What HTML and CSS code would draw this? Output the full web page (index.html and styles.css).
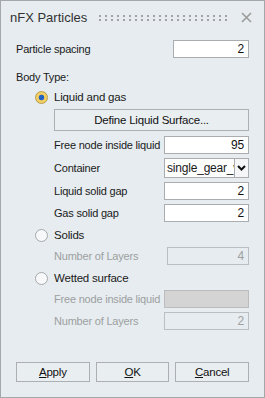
FILE: index.html
```html
<!DOCTYPE html>
<html lang="en">
<head>
  <meta charset="UTF-8">
  <title>nFX Particles</title>
  <link rel="stylesheet" href="styles.css">
</head>
<body>
<div class="dialog">
  <div class="titlebar">
    <span class="title">nFX Particles</span>
    <span class="grip"></span>
    <svg class="close" width="11" height="11" viewBox="0 0 11 11">
      <path d="M1 1L10 10M10 1L1 10" stroke="#9c9c9c" stroke-width="1.6" fill="none"/>
    </svg>
  </div>

  <div class="row spacing-row">
    <span>Particle spacing</span>
    <span class="input">2</span>
  </div>

  <div class="group-label">Body Type:</div>

  <div class="radio-row first">
    <span class="radio on"></span>
    <span>Liquid and gas</span>
  </div>
  <div class="sub">
    <div class="btn wide">Define Liquid Surface...</div>
    <div class="row field">
      <span>Free node inside liquid</span>
      <span class="input">95</span>
    </div>
    <div class="row field">
      <span>Container</span>
      <span class="select"><span class="select-text">single_gear_v</span><span class="arrow"><svg width="9" height="6" viewBox="0 0 9 6"><path d="M1 1L4.5 4.5L8 1" stroke="#111" stroke-width="2" fill="none"/></svg></span></span>
    </div>
    <div class="row field">
      <span>Liquid solid gap</span>
      <span class="input">2</span>
    </div>
    <div class="row field">
      <span>Gas solid gap</span>
      <span class="input">2</span>
    </div>
  </div>

  <div class="radio-row">
    <span class="radio"></span>
    <span>Solids</span>
  </div>
  <div class="sub">
    <div class="row field disabled">
      <span>Number of Layers</span>
      <span class="input narrow">4</span>
    </div>
  </div>

  <div class="radio-row">
    <span class="radio"></span>
    <span>Wetted surface</span>
  </div>
  <div class="sub">
    <div class="row field disabled">
      <span>Free node inside liquid</span>
      <span class="input filled"></span>
    </div>
    <div class="row field disabled">
      <span>Number of Layers</span>
      <span class="input">2</span>
    </div>
  </div>

  <div class="actions">
    <div class="btn"><u>A</u>pply</div>
    <div class="btn"><u>O</u>K</div>
    <div class="btn"><u>C</u>ancel</div>
  </div>
</div>
</body>
</html>
```

FILE: styles.css
```css
body {
  margin: 0;
  padding: 0;
}

.dialog {
  width: 265px;
  height: 398px;
  box-sizing: border-box;
  border: 1px solid #a4a8ab;
  background: #e6ecef;
  display: flex;
  flex-direction: column;
  padding: 0 15px;
  font-family: "Liberation Sans", Arial, sans-serif;
  font-size: 11px;
  letter-spacing: -0.2px;
  color: #1a1a1a;
}

.titlebar {
  height: 33px;
  margin: 0 -6px;
  display: flex;
  align-items: center;
}

.title {
  font-size: 13px;
  letter-spacing: 0;
  color: #333;
}

.grip {
  flex: 1;
  height: 6px;
  margin: 0 12px 0 12px;
  background:
    linear-gradient(to right, #a2a2a2 2px, transparent 2px) 0 0 / 6px 2px repeat-x,
    linear-gradient(to right, #a2a2a2 2px, transparent 2px) 0 4px / 6px 2px repeat-x;
}

.close {
  margin-right: 3px;
}

.row {
  display: flex;
  align-items: center;
  justify-content: space-between;
}

.spacing-row {
  margin-top: 6px;
}

.input {
  width: 85px;
  height: 18px;
  box-sizing: border-box;
  border: 1px solid #a9adb0;
  background: #fff;
  text-align: right;
  padding-right: 4px;
  line-height: 16px;
  font-size: 12px;
  color: #111;
}

.spacing-row .input {
  width: 76px;
  height: 18px;
}

.group-label {
  margin-top: 12px;
  height: 14px;
  line-height: 14px;
}

.radio-row {
  display: flex;
  align-items: center;
  height: 16px;
  margin-top: 5px;
  padding-left: 19px;
  font-size: 11.5px;
}

.radio-row.first {
  margin-top: 5px;
}

.radio {
  width: 11px;
  height: 11px;
  border-radius: 50%;
  border: 1px solid #a6a9ac;
  background: #f7f8f9;
  margin-right: 6px;
}

.radio.on {
  border-color: #b59b4e;
  background: radial-gradient(circle, #2361c4 0, #2361c4 2.4px, #f3cf62 3.2px);
}

.sub {
  padding-left: 38px;
  display: flex;
  flex-direction: column;
}

.btn {
  height: 20px;
  box-sizing: border-box;
  border: 1px solid #acb0b3;
  background: #e9eef1;
  text-align: center;
  line-height: 18px;
  font-size: 11.5px;
  color: #111;
}

.btn.wide {
  height: 22px;
  line-height: 20px;
  margin-top: 4px;
}

.field {
  margin-top: 4px;
}

.sub .btn + .field {
  margin-top: 5px;
}

.select {
  width: 85px;
  height: 20px;
  box-sizing: border-box;
  border: 1px solid #a9adb0;
  background: #fff;
  display: flex;
}

.select-text {
  flex: 1;
  overflow: hidden;
  white-space: nowrap;
  padding-left: 2px;
  line-height: 18px;
  font-size: 12px;
}

.arrow {
  width: 13px;
  border-left: 1px solid #a9adb0;
  background: #f4f6f7;
  display: flex;
  align-items: center;
  justify-content: center;
}

.disabled {
  color: #9d9fa1;
}

.disabled .input {
  background: #e6ecef;
  border-color: #bcbfc1;
  color: #9d9fa1;
}

.disabled .input.narrow {
  width: 82px;
}

.disabled .input.filled {
  background: #d4d4d4;
  border-color: #bcbcbc;
}

.actions {
  margin-top: auto;
  margin-bottom: 15px;
  display: flex;
  gap: 6px;
}

.actions .btn {
  flex: 1;
}
```
